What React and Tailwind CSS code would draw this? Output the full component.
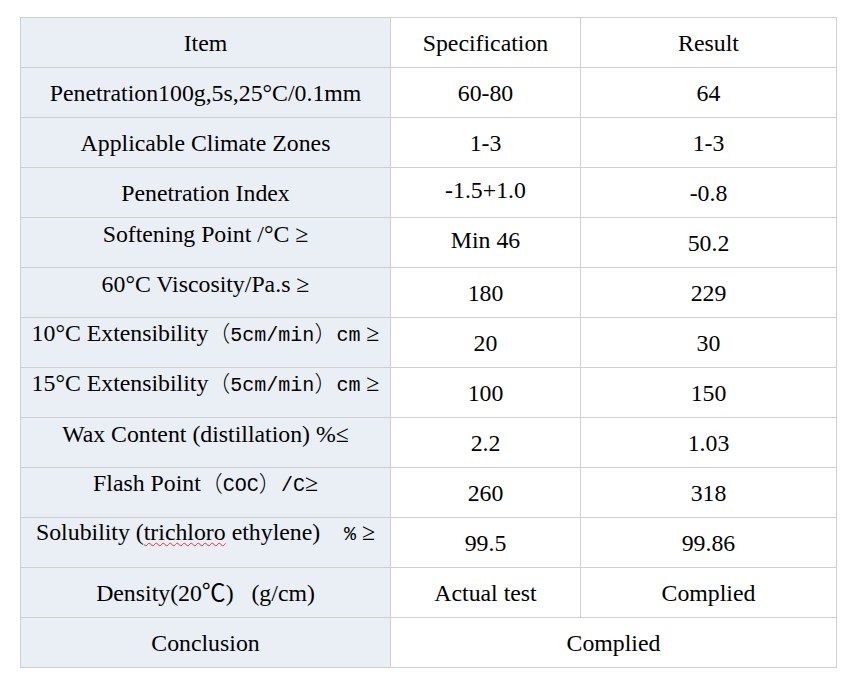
import React from "react";

const serif = { fontFamily: '"Liberation Serif", "Noto Sans CJK SC", serif' };

const Mono = ({ children }) => (
  <span className="font-['Liberation_Mono',monospace] text-[20px]">{children}</span>
);

const Paren = ({ children }) => (
  <span className="font-['Noto_Sans_CJK_SC',sans-serif] text-[22px] font-light">{children}</span>
);

const rows = [
  { item: "Penetration100g,5s,25°C/0.1mm", spec: "60-80", result: "64" },
  { item: "Applicable Climate Zones", spec: "1-3", result: "1-3" },
  { item: "Penetration Index", spec: "-1.5+1.0", result: "-0.8", specUp: true },
  { item: "Softening Point /°C ≥", spec: "Min 46", result: "50.2", up: true, specUp: true },
  { item: "60°C Viscosity/Pa.s ≥", spec: "180", result: "229", up: true },
  {
    item: (
      <>
        10°C Extensibility<Paren>（</Paren>
        <Mono>5cm/min</Mono>
        <Paren>）</Paren>
        <Mono>cm</Mono> ≥
      </>
    ),
    spec: "20",
    result: "30",
    up: true,
  },
  {
    item: (
      <>
        15°C Extensibility<Paren>（</Paren>
        <Mono>5cm/min</Mono>
        <Paren>）</Paren>
        <Mono>cm</Mono> ≥
      </>
    ),
    spec: "100",
    result: "150",
    up: true,
  },
  { item: "Wax Content (distillation) %≤", spec: "2.2", result: "1.03", up: true },
  {
    item: (
      <>
        Flash Point<Paren>（</Paren>
        <Mono>COC</Mono>
        <Paren>）</Paren>
        <Mono>/C</Mono>≥
      </>
    ),
    spec: "260",
    result: "318",
    up: true,
  },
  {
    item: (
      <>
        Solubility (
        <span className="underline decoration-wavy decoration-red-500 decoration-1 underline-offset-2">
          trichloro
        </span>{" "}
        ethylene)&nbsp;&nbsp;&nbsp;&nbsp;<Mono>%</Mono> ≥
      </>
    ),
    spec: "99.5",
    result: "99.86",
    up: true,
  },
  { item: "Density(20℃)\u00a0\u00a0\u00a0(g/cm)", spec: "Actual test", result: "Complied" },
];

export default function App() {
  return (
    <div className="w-[848px] h-[684px] bg-white pt-[17px] pl-[20px]" style={serif}>
      <table className="border-collapse text-[23.8px] text-black text-center leading-[26px]">
        <tbody>
          <tr className="h-[50px]">
            <td className="w-[370px] border border-[#cfcfcf] bg-[#eaeff6]">Item</td>
            <td className="w-[190px] border border-[#cfcfcf]">Specification</td>
            <td className="w-[256px] border border-[#cfcfcf]">Result</td>
          </tr>
          {rows.map((r, i) => (
            <tr key={i} className="h-[50px]">
              <td
                className={
                  "border border-[#cfcfcf] bg-[#eaeff6] whitespace-nowrap " +
                  (r.up ? "pb-[18px]" : "")
                }
              >
                {r.item}
              </td>
              <td className={"border border-[#cfcfcf] " + (r.specUp ? "pb-[5px]" : "")}>
                {r.spec}
              </td>
              <td className="border border-[#cfcfcf]">{r.result}</td>
            </tr>
          ))}
          <tr className="h-[50px]">
            <td className="border border-[#cfcfcf] bg-[#eaeff6]">Conclusion</td>
            <td colSpan={2} className="border border-[#cfcfcf]">
              Complied
            </td>
          </tr>
        </tbody>
      </table>
    </div>
  );
}
